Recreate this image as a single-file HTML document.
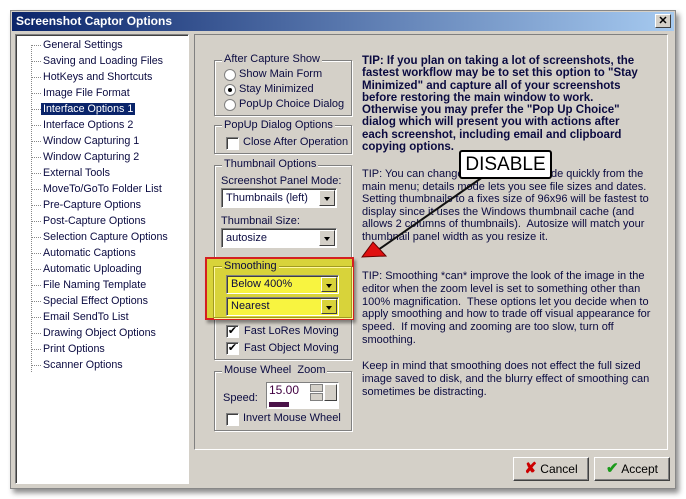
<!DOCTYPE html>
<html><head><style>
*{margin:0;padding:0;box-sizing:border-box}
body{width:686px;height:499px;background:#fff;position:relative;overflow:hidden;font-family:"Liberation Sans",sans-serif;font-size:11px;color:#0a0a40}
.a{position:absolute}
.win{left:10px;top:10px;width:666px;height:479px;background:#d4d0c8;border:1px solid #888;box-shadow:3px 4px 5px rgba(0,0,0,.45)}
.title{left:12px;top:12px;width:662px;height:19px;background:linear-gradient(90deg,#0a246a,#a6caf0);color:#fff;font-weight:bold;font-size:12px;padding:2px 4px}
.x{left:655px;top:14px;width:16px;height:14px;background:#d4d0c8;border:1px solid;border-color:#fff #404040 #404040 #fff;font-size:11px;font-weight:bold;text-align:center;line-height:12px;color:#000}
.tree{left:15px;top:34px;width:174px;height:450px;background:#fff;border:1px solid;border-color:#808080 #fff #fff #808080;box-shadow:inset 1px 1px 0 #404040;font-size:10.7px}
.ti{position:absolute;left:27px;height:15px;line-height:15px;white-space:nowrap}
.ti::before{content:"";position:absolute;left:-11px;top:7px;width:9px;border-top:1px dotted #888}
.vl{left:30px;top:40px;height:327px;border-left:1px dotted #888}
.sel{background:#0a246a;color:#fff;padding:0 2px;margin-left:-2px}
.panel{left:194px;top:34px;width:474px;height:416px;border:1px solid;border-color:#808080 #fff #fff #808080}
.grp{position:absolute;border:1px solid #808080;box-shadow:1px 1px 0 #fff,inset 1px 1px 0 #fff}
.lg{position:absolute;background:#d4d0c8;padding:0 2px;white-space:nowrap}
.rad{position:absolute;width:12px;height:12px;border-radius:50%;background:#fff;border:1px solid #808080}
.chk{position:absolute;width:13px;height:13px;background:#fff;border:1px solid;border-color:#808080 #fff #fff #808080;box-shadow:inset 1px 1px 0 #404040;font-size:11px;line-height:11px;text-align:center;color:#000}
.cmb{position:absolute;height:20px;background:#fff;border:1px solid;border-color:#808080 #fff #fff #808080;box-shadow:inset 1px 1px 0 #404040;padding:3px 4px;white-space:nowrap}
.cb{position:absolute;right:1px;top:1px;width:16px;height:16px;background:#d4d0c8;border:1px solid;border-color:#fff #404040 #404040 #fff}
.cb::after{content:"";position:absolute;left:4px;top:6px;border:3px solid transparent;border-top:4px solid #000}
.t{position:absolute;white-space:nowrap}
.tip{position:absolute;left:362px;width:300px;line-height:12.3px;white-space:nowrap}
.btn{position:absolute;top:457px;width:76px;height:24px;border:1px solid;border-color:#fff #404040 #404040 #fff;box-shadow:inset -1px -1px 0 #808080;font-size:12px;line-height:22px;text-align:center;color:#000}
</style></head><body>
<div class="a win"></div>
<div class="a title">Screenshot Captor Options</div>
<div class="a x">✕</div>
<div class="a tree">
<div class="a vl" style="left:15px;top:10px"></div>
<div class="ti" style="top:3px">General Settings</div>
<div class="ti" style="top:19px">Saving and Loading Files</div>
<div class="ti" style="top:35px">HotKeys and Shortcuts</div>
<div class="ti" style="top:51px">Image File Format</div>
<div class="ti" style="top:67px"><span class="sel">Interface Options 1</span></div>
<div class="ti" style="top:83px">Interface Options 2</div>
<div class="ti" style="top:99px">Window Capturing 1</div>
<div class="ti" style="top:115px">Window Capturing 2</div>
<div class="ti" style="top:131px">External Tools</div>
<div class="ti" style="top:147px">MoveTo/GoTo Folder List</div>
<div class="ti" style="top:163px">Pre-Capture Options</div>
<div class="ti" style="top:179px">Post-Capture Options</div>
<div class="ti" style="top:195px">Selection Capture Options</div>
<div class="ti" style="top:211px">Automatic Captions</div>
<div class="ti" style="top:227px">Automatic Uploading</div>
<div class="ti" style="top:243px">File Naming Template</div>
<div class="ti" style="top:259px">Special Effect Options</div>
<div class="ti" style="top:275px">Email SendTo List</div>
<div class="ti" style="top:291px">Drawing Object Options</div>
<div class="ti" style="top:307px">Print Options</div>
<div class="ti" style="top:323px">Scanner Options</div>
</div>
<div class="a panel"></div>

<div class="grp" style="left:214px;top:60px;width:138px;height:56px"></div>
<div class="lg" style="left:222px;top:53px">After Capture Show</div>
<div class="rad" style="left:224px;top:69px"></div><div class="t" style="left:239px;top:68px">Show Main Form</div>
<div class="rad" style="left:224px;top:84px"><div style="position:absolute;left:3px;top:3px;width:4px;height:4px;background:#000;border-radius:50%"></div></div><div class="t" style="left:239px;top:83px">Stay Minimized</div>
<div class="rad" style="left:224px;top:99px"></div><div class="t" style="left:239px;top:98px">PopUp Choice Dialog</div>

<div class="grp" style="left:214px;top:125px;width:138px;height:29px"></div>
<div class="lg" style="left:222px;top:119px">PopUp Dialog Options</div>
<div class="chk" style="left:226px;top:137px"></div><div class="t" style="left:243px;top:136px">Close After Operation</div>

<div class="grp" style="left:214px;top:165px;width:138px;height:195px"></div>
<div class="lg" style="left:222px;top:158px">Thumbnail Options</div>
<div class="t" style="left:221px;top:175px">Screenshot Panel Mode:</div>
<div class="cmb" style="left:221px;top:188px;width:116px">Thumbnails (left)<div class="cb"></div></div>
<div class="t" style="left:221px;top:215px">Thumbnail Size:</div>
<div class="cmb" style="left:221px;top:228px;width:116px">autosize<div class="cb"></div></div>

<div class="a" style="left:205px;top:257px;width:149px;height:63px;background:#d8d33a;border:2px solid #d42020;box-shadow:2px 3px 3px rgba(0,0,0,.4)"></div>
<div class="grp" style="left:213px;top:266px;width:139px;height:52px;border-color:#a09a20;box-shadow:1px 1px 0 #fff8a0,inset 1px 1px 0 #fff8a0"></div>
<div class="lg" style="left:222px;top:260px;background:#d8d33a">Smoothing</div>
<div class="cmb" style="left:226px;top:275px;width:113px;height:19px;background:#f8f440;padding:2px 4px">Below 400%<div class="cb" style="height:15px;background:#d8d33a"></div></div>
<div class="cmb" style="left:226px;top:297px;width:113px;height:19px;background:#f8f440;padding:2px 4px">Nearest<div class="cb" style="height:15px;background:#d8d33a"></div></div>

<div class="chk" style="left:226px;top:325px">✔</div><div class="t" style="left:244px;top:325px">Fast LoRes Moving</div>
<div class="chk" style="left:226px;top:342px">✔</div><div class="t" style="left:244px;top:342px">Fast Object Moving</div>

<div class="grp" style="left:214px;top:371px;width:138px;height:60px"></div>
<div class="lg" style="left:222px;top:364px">Mouse Wheel&nbsp; Zoom</div>
<div class="t" style="left:223px;top:392px">Speed:</div>
<div class="a" style="left:266px;top:382px;width:73px;height:27px;background:#fff;border:1px solid;border-color:#808080 #fff #fff #808080"></div>
<div class="t" style="left:269px;top:383px;color:#400040;font-size:12px">15.00</div>
<div class="a" style="left:269px;top:402px;width:20px;height:5px;background:#4a1248"></div>
<div class="a" style="left:310px;top:384px;width:13px;height:8px;background:#d4d0c8;border:1px solid #808080"></div>
<div class="a" style="left:310px;top:393px;width:13px;height:8px;background:#d4d0c8;border:1px solid #808080"></div>
<div class="a" style="left:324px;top:384px;width:13px;height:17px;background:#d4d0c8;border:1px solid;border-color:#fff #404040 #404040 #fff"></div>
<div class="chk" style="left:226px;top:413px"></div><div class="t" style="left:243px;top:412px">Invert Mouse Wheel</div>

<div class="tip" style="top:55px;font-weight:bold;font-size:11.5px;line-height:12.3px">TIP: If you plan on taking a lot of screenshots, the<br>fastest workflow may be to set this option to "Stay<br>Minimized" and capture all of your screenshots<br>before restoring the main window to work.<br>Otherwise you may prefer the "Pop Up Choice"<br>dialog which will present you with actions after<br>each screenshot, including email and clipboard<br>copying options.</div>
<div class="tip" style="top:168px;line-height:12.6px">TIP: You can change the thumbnail mode quickly from the<br>main menu; details mode lets you see file sizes and dates.<br>Setting thumbnails to a fixes size of 96x96 will be fastest to<br>display since it uses the Windows thumbnail cache (and<br>allows 2 columns of thumbnails).&nbsp; Autosize will match your<br>thumbnail panel width as you resize it.</div>
<div class="tip" style="top:270px;line-height:12.8px">TIP: Smoothing *can* improve the look of the image in the<br>editor when the zoom level is set to something other than<br>100% magnification.&nbsp; These options let you decide when to<br>apply smoothing and how to trade off visual appearance for<br>speed.&nbsp; If moving and zooming are too slow, turn off<br>smoothing.</div>
<div class="tip" style="top:360px;line-height:12.8px">Keep in mind that smoothing does not effect the full sized<br>image saved to disk, and the blurry effect of smoothing can<br>sometimes be distracting.</div>

<svg class="a" style="left:0;top:0" width="686" height="499">
<line x1="490" y1="172" x2="378" y2="250" stroke="#111" stroke-width="2"/>
<polygon points="362,257 373,242 386,256" fill="#e01010" stroke="#600" stroke-width="1"/>
</svg>
<div class="a" style="left:459px;top:150px;width:93px;height:29px;background:#fff;border:2px solid #000;border-radius:3px;font-size:19px;line-height:25px;text-align:center;color:#000">DISABLE</div>

<div class="btn" style="left:513px"><span style="color:#c00;font-weight:bold;font-size:15px">✘</span> Cancel</div>
<div class="btn" style="left:594px"><span style="color:#1a9a1a;font-weight:bold;font-size:15px">✔</span> Accept</div>
</body></html>
